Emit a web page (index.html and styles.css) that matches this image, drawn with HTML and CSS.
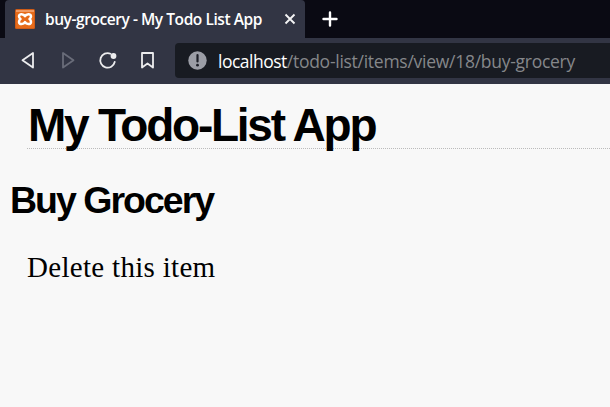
FILE: index.html
```html
<!DOCTYPE html>
<html lang="en">
<head>
<meta charset="utf-8">
<title>buy-grocery - My Todo List App</title>
<link rel="stylesheet" href="styles.css">
</head>
<body>
<div class="tabs">
  <div class="tab">
    <svg class="favicon" width="20" height="20" viewBox="0 0 20 20"><rect width="20" height="20" rx="1.5" fill="#cf5c17"/><rect x="1" y="1" width="18" height="18" rx="1" fill="#e66b1a"/><path d="M1 1h18v2H1z" fill="#f19a62"/><path d="M10 7.2C8.800 5 4 4.200 4 7.300Q4 9 5.500 10Q4 11 4 13C4 16.200 8.800 15.400 10 13C11.200 15.400 16 16.200 16 13Q16 11 14.500 10Q16 9 16 7.300C16 4.200 11.200 5 10 7.200Z" fill="none" stroke="#fff" stroke-width="2.500" stroke-linejoin="round"/></svg>
    <span class="tab-title">buy-grocery - My Todo List App</span>
    <svg class="close" width="12" height="12" viewBox="0 0 12 12"><path d="M1.500 1.500l9 9M10.500 1.500l-9 9" stroke="#f3f3f4" stroke-width="1.900"/></svg>
  </div>
  <svg class="plus" width="16" height="16" viewBox="0 0 16 16"><path d="M8 1.500v13M1.500 8h13" stroke="#fff" stroke-width="2.400" stroke-linecap="round"/></svg>
</div>
<div class="toolbar">
  <svg class="nav" width="160" height="46" viewBox="0 0 160 46" fill="none" stroke="#ececee" stroke-width="1.800" stroke-linejoin="round" stroke-linecap="round">
    <path d="M33 15v14.500L22.500 22.250Z"/>
    <path d="M63 15v14.500L73.500 22.250Z" stroke="#696c79"/>
    <path d="M110.500 15.700A7.300 7.300 0 1 0 114.700 24"/>
    <circle cx="113.500" cy="18" r="2.900" fill="#ececee" stroke="none"/>
    <path d="M142 15h11v14.500l-5.500-4-5.500 4Z"/>
  </svg>
  <div class="address">
    <svg class="info" width="19" height="19" viewBox="0 0 19 19"><circle cx="9.500" cy="9.500" r="9.200" fill="#9b9da6"/><path d="M9.500 4v6.500" stroke="#1c1e27" stroke-width="2.200" stroke-linecap="round"/><circle cx="9.500" cy="14.200" r="1.400" fill="#1c1e27"/></svg>
    <span class="url"><span class="host">localhost</span>/todo-list/items/view/18/buy-grocery</span>
  </div>
</div>
<main>
  <h1>My Todo-List App</h1>
  <h2>Buy Grocery</h2>
  <p>Delete this item</p>
</main>
</body>
</html>
```
FILE: styles.css
```css
* { box-sizing: border-box; }
body { margin: 0; height: 407px; overflow: hidden; background: #f8f8f8; color: #000; }
.tabs { height: 38px; display: flex; background: #0a0a13; }
.tab { width: 300px; margin-left: 5px; padding-left: 10px; background: #323544; border-radius: 4px 4px 0 0; display: flex; align-items: center; white-space: nowrap; }
.favicon { flex: none; }
.tab-title { width: 240px; margin-left: 10px; font: 600 15.5px/20px "Open Sans", sans-serif; letter-spacing: -0.44px; color: #fff; }
.close { flex: none; margin-left: -1px; }
.plus { margin: 11px 0 0 17px; }
.toolbar { height: 46px; display: flex; align-items: center; background: #323544; }
.nav { flex: none; }
.address { flex: 1; height: 35px; margin-left: 15px; margin-top: -1px; padding-left: 13px; display: flex; align-items: center; background: #181b22; border-radius: 4px 0 0 4px; white-space: nowrap; }
.info { flex: none; }
.url { margin-left: 11px; font: 17.5px/24px "Open Sans", sans-serif; letter-spacing: -0.27px; color: #85878a; }
.host { color: #fff; letter-spacing: -0.5px; }
main { padding-top: 16px; }
h1, h2 { font-family: "Liberation Sans", sans-serif; font-weight: 700; white-space: nowrap; }
h1 { margin: 0 0 0 27px; padding-left: 1px; height: 49px; border-bottom: 1px dotted #bbb; font-size: 46px; line-height: 50px; letter-spacing: -2.25px; }
h2 { margin: 29px 0 0 10px; font-size: 37.5px; line-height: 44px; letter-spacing: -2px; }
p { margin: 28px 0 0 27px; font: 29px/34px "Liberation Serif", serif; letter-spacing: 0.3px; }
```
